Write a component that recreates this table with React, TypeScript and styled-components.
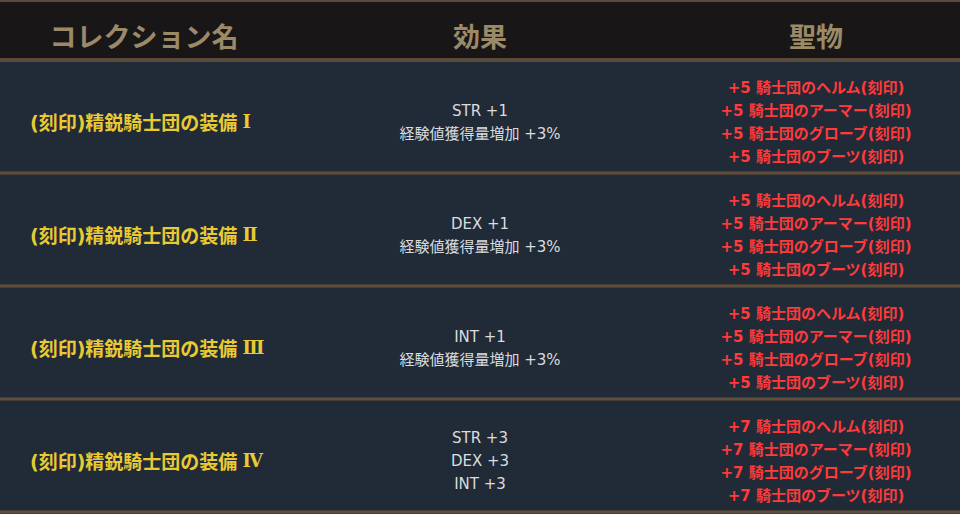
import React from "react";
import styled, { createGlobalStyle } from "styled-components";

const Global = createGlobalStyle`
  html, body { margin: 0; padding: 0; background: #212b38; }
  body { font-family: "DejaVu Sans", "Noto Sans CJK JP", sans-serif; }
`;

const Table = styled.div`
  width: 960px;
  border-top: 2px solid #5a4a3a;
`;

const sep = `
  background-image: linear-gradient(#3d3329, #5e4e3d 35%, #5e4e3d 65%, #3d3329);
  background-size: 100% 4px;
  background-repeat: no-repeat;
`;

const HeaderRow = styled.div`
  display: grid;
  grid-template-columns: 288px 384px 288px;
  height: 56px;
  background: #181617;
  border-bottom: 4px solid #5a4a39;
`;

const HeadCell = styled.div`
  display: flex;
  align-items: center;
  justify-content: center;
  color: #9b8a68;
  font-family: "Noto Sans CJK JP", sans-serif;
  font-size: 27px;
  font-weight: 700;
  padding-top: 10px;
`;

const Row = styled.div`
  display: grid;
  grid-template-columns: 288px 384px 288px;
  height: 113px;
  box-sizing: border-box;
  padding-bottom: 4px;
  background-color: #212b38;
  ${sep}
  background-position: bottom;
`;

const NameCell = styled.div`
  display: flex;
  align-items: center;
  padding-left: 30px;
  padding-top: 10px;
  color: #e9ca33;
  font-size: 19px;
  font-weight: 700;
  white-space: nowrap;
`;

const Numeral = styled.span`
  font-family: "DejaVu Serif", serif;
  font-size: 18px;
  margin-left: 5px;
`;

const EffectCell = styled.div`
  display: flex;
  flex-direction: column;
  align-items: center;
  justify-content: center;
  padding-top: 12px;
  color: #dadcdf;
  font-size: 15px;
  line-height: 23px;
`;

const RelicCell = styled.div`
  display: flex;
  flex-direction: column;
  align-items: center;
  justify-content: center;
  padding-top: 12px;
  color: #ff3a3a;
  font-size: 15px;
  font-weight: 700;
  line-height: 23px;
  white-space: nowrap;
`;

const parts = ["ヘルム", "アーマー", "グローブ", "ブーツ"];

const rows = [
  { name: "(刻印)精鋭騎士団の装備", num: "Ⅰ", effects: ["STR +1", "経験値獲得量増加 +3%"], lv: 5 },
  { name: "(刻印)精鋭騎士団の装備", num: "Ⅱ", effects: ["DEX +1", "経験値獲得量増加 +3%"], lv: 5 },
  { name: "(刻印)精鋭騎士団の装備", num: "Ⅲ", effects: ["INT +1", "経験値獲得量増加 +3%"], lv: 5 },
  { name: "(刻印)精鋭騎士団の装備", num: "Ⅳ", effects: ["STR +3", "DEX +3", "INT +3"], lv: 7 },
];

export default function App() {
  return (
    <>
      <Global />
      <Table>
        <HeaderRow>
          <HeadCell>コレクション名</HeadCell>
          <HeadCell>効果</HeadCell>
          <HeadCell>聖物</HeadCell>
        </HeaderRow>
        {rows.map((r) => (
          <Row key={r.num}>
            <NameCell>
              {r.name}
              <Numeral>{r.num}</Numeral>
            </NameCell>
            <EffectCell>
              {r.effects.map((e) => (
                <div key={e}>{e}</div>
              ))}
            </EffectCell>
            <RelicCell>
              {parts.map((p) => (
                <div key={p}>{`+${r.lv} 騎士団の${p}(刻印)`}</div>
              ))}
            </RelicCell>
          </Row>
        ))}
      </Table>
    </>
  );
}
